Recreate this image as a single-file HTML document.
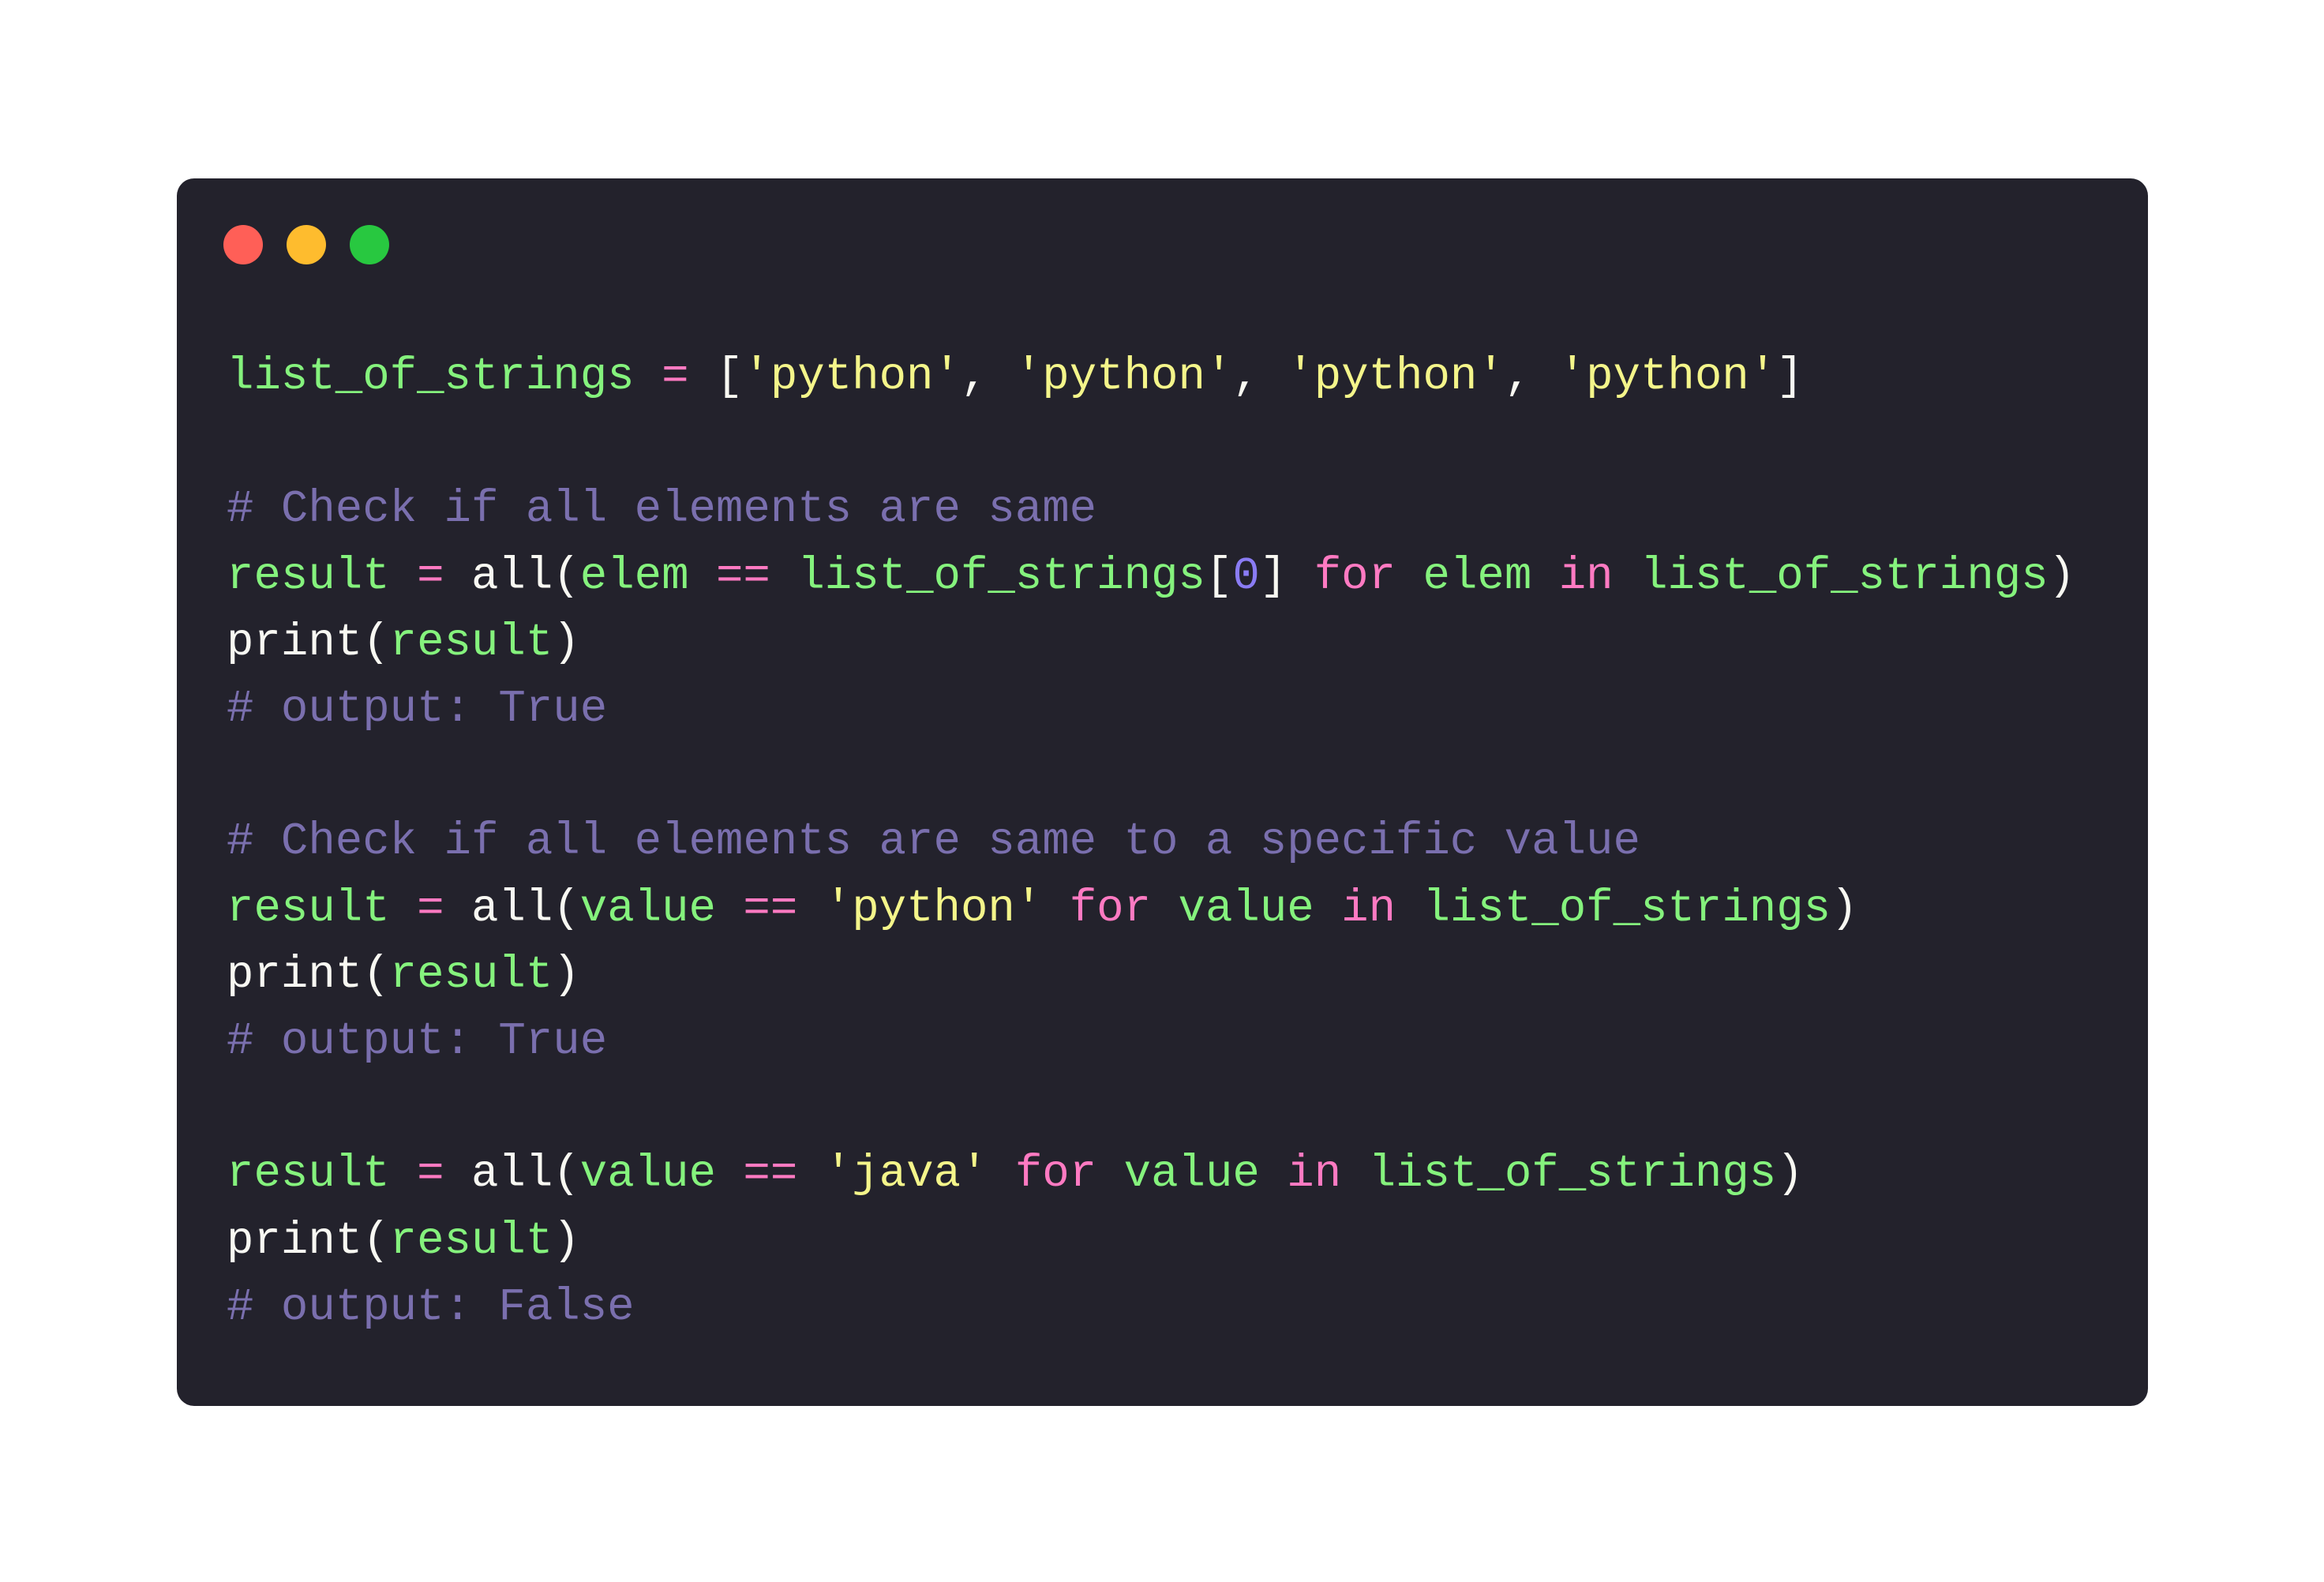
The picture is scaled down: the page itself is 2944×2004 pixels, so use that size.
<!DOCTYPE html>
<html><head><meta charset="utf-8"><style>
html,body{margin:0;padding:0;background:#fff;width:2944px;height:2004px;overflow:hidden}
.card{position:absolute;left:224px;top:226px;width:2497px;height:1555px;background:#23222c;border-radius:22px}
.dot{position:absolute;top:285px;width:50px;height:50px;border-radius:50%}
pre{position:absolute;left:287px;top:436px;margin:0;font-family:"Liberation Mono",monospace;font-size:57.4px;line-height:84.2px;color:#f8f8f2}
.g{color:#85f27d}.y{color:#f4f58a}.p{color:#ff7ac2}.c{color:#7a6fae}.n{color:#8a7cf4}
</style></head><body>
<div class="card"></div>
<div class="dot" style="left:283px;background:#ff5f57"></div>
<div class="dot" style="left:363px;background:#febc2e"></div>
<div class="dot" style="left:443px;background:#28c840"></div>
<pre><span class="g">list_of_strings</span> <span class="p">=</span> [<span class="y">'python'</span>, <span class="y">'python'</span>, <span class="y">'python'</span>, <span class="y">'python'</span>]

<span class="c"># Check if all elements are same</span>
<span class="g">result</span> <span class="p">=</span> all(<span class="g">elem</span> <span class="p">==</span> <span class="g">list_of_strings</span>[<span class="n">0</span>] <span class="p">for</span> <span class="g">elem</span> <span class="p">in</span> <span class="g">list_of_strings</span>)
print(<span class="g">result</span>)
<span class="c"># output: True</span>

<span class="c"># Check if all elements are same to a specific value</span>
<span class="g">result</span> <span class="p">=</span> all(<span class="g">value</span> <span class="p">==</span> <span class="y">'python'</span> <span class="p">for</span> <span class="g">value</span> <span class="p">in</span> <span class="g">list_of_strings</span>)
print(<span class="g">result</span>)
<span class="c"># output: True</span>

<span class="g">result</span> <span class="p">=</span> all(<span class="g">value</span> <span class="p">==</span> <span class="y">'java'</span> <span class="p">for</span> <span class="g">value</span> <span class="p">in</span> <span class="g">list_of_strings</span>)
print(<span class="g">result</span>)
<span class="c"># output: False</span></pre>
</body></html>
